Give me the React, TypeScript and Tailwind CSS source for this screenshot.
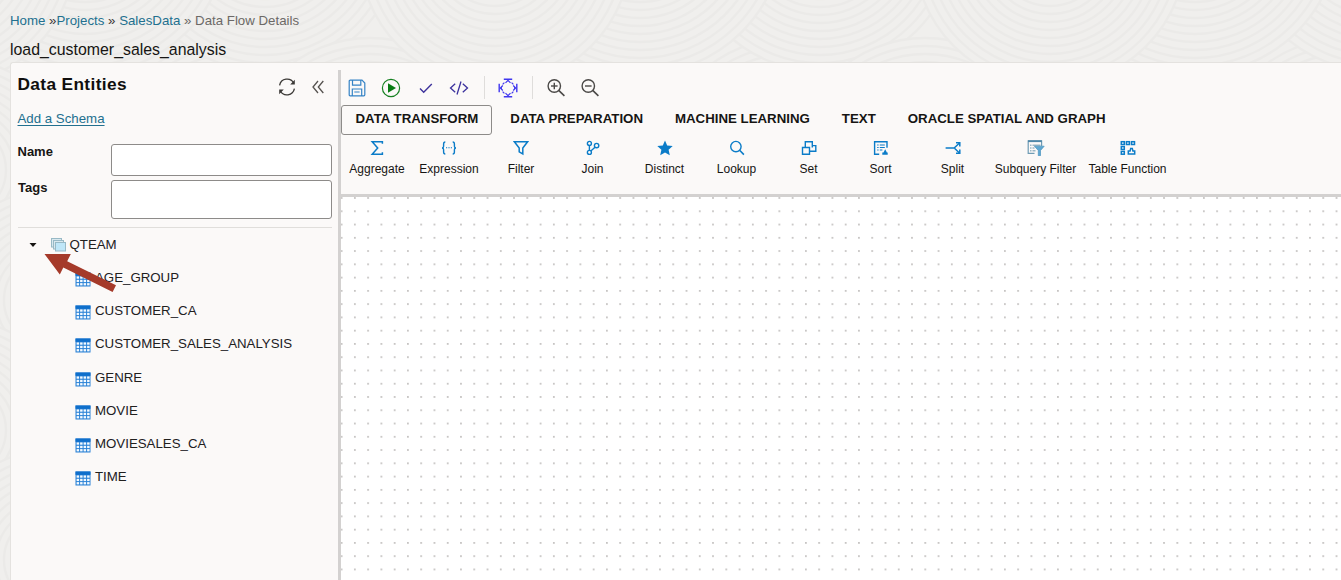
import type { ReactNode } from 'react';

const BLUE = '#0b7cc8';

const tables = ['AGE_GROUP', 'CUSTOMER_CA', 'CUSTOMER_SALES_ANALYSIS', 'GENRE', 'MOVIE', 'MOVIESALES_CA', 'TIME'];

function Rings({ cx, cy, max }: { cx: number; cy: number; max: number }) {
  const radii: number[] = [];
  for (let r = max; r > 8; r -= 8) radii.push(r);
  return (
    <g>
      {radii.map((r) => (
        <circle key={r} cx={cx} cy={cy} r={r} fill="#f0efed" stroke="#ebeae8" strokeWidth="2.4" />
      ))}
    </g>
  );
}

function Backdrop() {
  return (
    <svg className="absolute inset-0 h-full w-full" viewBox="0 0 1341 580" preserveAspectRatio="none">
      <rect width="1341" height="580" fill="#f0efed" />
      {[-555, 0, 555].map((o) => (
        <g key={o}>
          <Rings cx={370 + o} cy={170} max={132} />
          <Rings cx={790 + o} cy={170} max={132} />
          <Rings cx={820 + o} cy={-65} max={136} />
          <Rings cx={640 + o} cy={-70} max={144} />
          <Rings cx={495 + o} cy={-50} max={136} />
        </g>
      ))}
      {[0, 1, 2, 3].map((i) => (
        <Rings key={i} cx={i % 2 ? 50 : -40} cy={170 + i * 130} max={110} />
      ))}
    </svg>
  );
}

function TableIcon() {
  return (
    <svg className="mt-[3px] h-[15px] w-4 shrink-0" viewBox="0 0 16 15">
      <rect x="0.5" y="0.5" width="15" height="14" fill="#2a82d6" />
      <rect x="0.5" y="0.5" width="15" height="3.3" fill="#0f6fcb" />
      {[4.4, 7.8, 11.1].map((y) =>
        [1.6, 5.1, 8.6, 12.1].map((x) => (
          <rect key={`${x}-${y}`} x={x} y={y} width="2.5" height="2.3" fill="#f4faff" />
        )),
      )}
    </svg>
  );
}

function StackIcon() {
  return (
    <svg className="h-[14px] w-[15px]" viewBox="0 0 15 14" stroke="#98b9c6" strokeWidth="1">
      <rect x="0.5" y="0.5" width="10" height="8.5" fill="#d9e8ee" />
      <rect x="2.5" y="2.5" width="10" height="8.5" fill="#d9e8ee" />
      <rect x="4.5" y="4.5" width="10" height="8.5" fill="#bfe6f8" />
    </svg>
  );
}

function Glyph({ children, w = 16 }: { children: ReactNode; w?: number }) {
  return (
    <svg width={w} height="16" viewBox={`0 0 ${w} 16`} fill="none" stroke={BLUE} strokeWidth="1.4">
      {children}
    </svg>
  );
}

const operators: { label: string; box: string; icon: ReactNode }[] = [
  { label: 'Aggregate', box: 'w-[72px]', icon: <Glyph><path d="M13.4 3.7V1.8H3.2L8.7 8l-5.5 6.2h10.2v-1.9" strokeWidth="1.5" /></Glyph> },
  {
    label: 'Expression', box: 'w-[72px]',
    icon: (
      <Glyph>
        <path d="M4.3 2C2.6 2 2.6 2.8 2.6 4v2.3C2.6 7.3 2 8 1 8c1 0 1.6.7 1.6 1.7V12c0 1.2 0 2 1.7 2M11.7 2c1.7 0 1.7.8 1.7 2v2.3c0 1 .6 1.7 1.6 1.7-1 0-1.6.7-1.6 1.7V12c0 1.2 0 2-1.7 2" />
        <path d="M5 7.8h1.2M7.4 7.8h1.2M9.8 7.8H11" strokeWidth="1.1" />
      </Glyph>
    ),
  },
  { label: 'Filter', box: 'w-[72px]', icon: <Glyph><path d="M1.4 1.8h13.2L9.8 8v6l-3.6-2.2V8z" strokeWidth="1.5" /></Glyph> },
  {
    label: 'Join', box: 'w-[71px]',
    icon: (
      <Glyph>
        <circle cx="4.4" cy="3.4" r="2" /><circle cx="4.4" cy="12.4" r="2" /><circle cx="11.6" cy="5.6" r="2.2" />
        <path d="M4.4 5.4v5M5.8 11l4.2-3.8" />
      </Glyph>
    ),
  },
  { label: 'Distinct', box: 'w-[73px]', icon: <Glyph><path d="M8 .5l2.2 5 5.5.5-4.1 3.8 1.2 5.4L8 12.4l-4.8 2.8 1.2-5.4L.3 6l5.5-.5z" fill={BLUE} stroke="none" /></Glyph> },
  { label: 'Lookup', box: 'w-[71px]', icon: <Glyph><circle cx="6.9" cy="6.6" r="5.2" /><path d="M10.6 10.3l4.3 4.3" strokeWidth="1.6" /></Glyph> },
  {
    label: 'Set', box: 'w-[73px]',
    icon: <Glyph><path d="M4.3 7.5V1.7h7v5.8M1.5 7.5h7v6.7h-7zM11.3 5.6h3.5v5.6H8.5" /></Glyph>,
  },
  {
    label: 'Sort', box: 'w-[71px]',
    icon: (
      <Glyph>
        <path d="M6.2 14.2H1.6V1.7h12.4v6" />
        <path d="M4.2 5h1.4M6.8 5h5M4.2 7.5h1.4M6.8 7.5h5M4.2 10h1.4M6.8 10h2.6" strokeWidth="1.1" />
        <path d="M12.2 9.2l1.7 3.3h.8v2.2H9.3v-2.2h1.2z" fill={BLUE} stroke="none" />
      </Glyph>
    ),
  },
  {
    label: 'Split', box: 'w-[73px]',
    icon: <Glyph><path d="M.6 8H9M9.2 8l5-4.7M9.2 8l5 4.7" strokeWidth="1.5" /><path d="M11 2.8h3.8v3.6M11 13.2h3.8V9.6" strokeWidth="1.5" /></Glyph>,
  },
  {
    label: 'Subquery Filter', box: 'w-[93px]',
    icon: (
      <Glyph w={18}>
        <path d="M7.5 13.4H1.2V.9h13.4v5" stroke="#6f9cb4" strokeWidth="1.2" />
        <path d="M1 1.2h13.8" stroke="#4f87a8" strokeWidth="1.8" />
        <path d="M3 5.3h1.5M5.5 5.3h8M3 8h1.5M5.5 8h2M3 10.7h1.5M5.5 10.7h3" stroke="#9bb6c4" />
        <path d="M7.4 6.2h9.8l-3.7 4.3v5.2h-2.2v-5.2z" fill="#5ea7d2" stroke="#4b93bf" strokeWidth=".7" />
      </Glyph>
    ),
  },
  {
    label: 'Table Function', box: 'w-[91px]',
    icon: (
      <Glyph>
        {[[1.3, 1.7], [6.4, 1.7], [11.5, 1.7], [1.3, 6.6], [1.3, 11.4]].map(([x, y]) => (
          <rect key={`${x}-${y}`} x={x} y={y} width="3" height="2.8" strokeWidth="1.5" />
        ))}
        <path d="M8.3 14.1v-3.2h1.8l.6-2.5h1.6l.6 2.5h1.8v3.2z" strokeWidth="1.5" />
      </Glyph>
    ),
  },
];

function Toolbar() {
  return (
    <div className="flex h-9 items-center pb-px pl-[7px]">
      <svg className="size-[18px]" viewBox="0 0 18 18" fill="none" stroke="#3583c5" strokeWidth="1.2">
        <path d="M1.2 2.2q0-1 1-1H14l2.8 2.8v11.8q0 1-1 1H2.2q-1 0-1-1zM4.5 1.5v4.7h8.3V1.5M4.3 16.5V10h9.4v6.5M6.3 13h5.3" />
      </svg>
      <svg className="ml-[15px] size-5" viewBox="0 0 20 20">
        <circle cx="10" cy="10" r="8.6" fill="none" stroke="#168021" strokeWidth="1.2" />
        <path d="M7 5.3l8 4.7-8 4.7z" fill="#087c13" />
      </svg>
      <svg className="ml-[18px] h-4 w-[14px]" viewBox="0 0 14 16" fill="none" stroke="#3d329b" strokeWidth="1.4">
        <path d="M1 8.5l3.7 3.7L12.8 4" />
      </svg>
      <svg className="ml-[16px] h-4 w-5" viewBox="0 0 20 16" fill="none" stroke="#3b319d" strokeWidth="1.3">
        <path d="M6.2 3.7L1.5 8l4.7 4.3M13.8 3.7L18.5 8l-4.7 4.3M12 1.5L8 14.5" />
      </svg>
      <div className="ml-[15px] h-[23px] w-px bg-[#dfdddb]" />
      <svg className="ml-[13px] size-5" viewBox="0 0 20 20" fill="none" stroke="#4037ef" strokeWidth="1.4">
        <path d="M5.8 1.2h8.4M5.8 18.8h8.4M1.2 5.8v8.4M18.8 5.8v8.4" />
        <path d="M7.5 4.8L10 2.3l2.5 2.5M7.5 15.2l2.5 2.5 2.5-2.5M4.8 7.5L2.3 10l2.5 2.5M15.2 7.5l2.5 2.5-2.5 2.5M2 10h2M16 10h2" strokeWidth="1.2" />
        <path d="M4.6 6.4l1.8-1.8M13.6 4.6l1.8 1.8M15.4 13.6l-1.8 1.8M6.4 15.4l-1.8-1.8" strokeWidth="1.2" />
      </svg>
      <div className="ml-[14px] h-[23px] w-px bg-[#dfdddb]" />
      {[true, false].map((plus) => (
        <svg key={String(plus)} className={plus ? 'ml-[14px] size-[18px]' : 'ml-4 size-[18px]'} viewBox="0 0 18 18" fill="none" stroke="#4b4947" strokeWidth="1.4">
          <circle cx="7.3" cy="7" r="6.2" />
          <path d="M11.7 11.4l5.7 5.4" strokeWidth="1.6" />
          <path d="M4 7h6.6" />
          {plus && <path d="M7.3 3.7v6.6" />}
        </svg>
      ))}
    </div>
  );
}

function Sidebar() {
  return (
    <aside className="relative w-[327px] shrink-0 pl-[6.5px] pr-[6px]">
      <div className="flex h-[38px] items-start justify-between pt-[11px]">
        <h2 className="text-[17.3px] font-bold leading-5 tracking-[0.36px] text-[#100f0e]">Data Entities</h2>
        <div className="flex items-center gap-4 pr-[8px] pt-[4px]">
          <svg className="size-[18px]" viewBox="0 0 18 18" fill="none" stroke="#3b3936" strokeWidth="1.3">
            <path d="M1.6 7.3A7.6 7.6 0 0 1 15.8 5.2M16.4 10.7A7.6 7.6 0 0 1 2.2 12.8" />
            <path d="M16.8 1.8v4.6h-4.6zM1.2 16.2v-4.6h4.6z" fill="#3b3936" stroke="none" />
          </svg>
          <svg className="h-[14px] w-3" viewBox="0 0 12 14" fill="none" stroke="#55524f" strokeWidth="1.3">
            <path d="M6 1L1 7l5 6M11.3 1l-5 6 5 6" />
          </svg>
        </div>
      </div>
      <a className="mt-[10px] block w-fit text-[13.27px] leading-4 text-[#22708f] underline underline-offset-2">Add a Schema</a>
      <div className="mt-[17px] flex h-8 justify-between text-[13px] font-bold leading-4 text-[#161513]">
        <label>Name</label>
        <div className="h-8 w-[221px] rounded-[3px] border border-[#8d8b89] bg-white" />
      </div>
      <div className="mt-[4px] flex h-[39px] justify-between text-[13px] font-bold leading-4 text-[#161513]">
        <label className="pl-[0.5px]">Tags</label>
        <div className="h-[39px] w-[221px] rounded-[3px] border border-[#8d8b89] bg-white" />
      </div>
      <div className="mt-2 h-px bg-[#e0dedb]" />
      <div className="flex h-[33px] items-center pl-[11px] pt-px text-[13.27px] text-[#21201e]">
        <svg className="h-1 w-2" viewBox="0 0 8 4"><path d="M.5 0h7L4 4z" fill="#161513" /></svg>
        <span className="ml-[14px] flex items-center gap-1"><StackIcon />QTEAM</span>
      </div>
      <ul className="text-[13.27px] text-[#21201e]">
        {tables.map((t) => (
          <li key={t} className="flex h-[33.3px] items-center gap-1 pl-[57.5px]"><TableIcon /><span className="whitespace-nowrap">{t}</span></li>
        ))}
      </ul>
      <svg className="absolute left-[33px] top-[190px] h-[40px] w-[74px]" viewBox="0 0 74 40">
        <path d="M.5 1l26.3 0-3.6 7.2 48.8 24-3.4 6.8L19.3 14.5 15.8 21.5z" fill="#a53a2a" />
      </svg>
    </aside>
  );
}

export default function App() {
  return (
    <div className="relative h-[580px] w-[1341px] overflow-hidden font-['Liberation_Sans',Arial,sans-serif]">
      <Backdrop />
      <div className="relative flex h-full flex-col">
        <header className="h-[62px] shrink-0 pl-[10px] pt-3 text-[#161513]">
          <nav className="flex h-4 whitespace-pre text-[13.27px] leading-[17px] text-[#22708f]">
            <a>Home</a><span className="text-[#3a3836]"> »</span><a>Projects</a><span className="text-[#3a3836]"> » </span>
            <a>SalesData</a><span className="text-[#6c6966]"> » Data Flow Details</span>
          </nav>
          <h1 className="mt-3 text-[15.88px] leading-5">load_customer_sales_analysis</h1>
        </header>
        <main className="ml-[10px] flex min-h-0 flex-1 rounded-tl-[3px] border-l border-t border-[#e4e2df] bg-[#fbf9f8]">
          <Sidebar />
          <section className="mt-[7px] flex min-w-0 flex-1 flex-col border-l-[3px] border-[#d3d1d0]">
            <div className="h-[127px] shrink-0 border-b-[3px] border-[#d3d1d0]">
              <Toolbar />
              <div className="-mt-px flex h-[30px] text-[13.27px] font-bold text-[#161513]">
                {['DATA TRANSFORM', 'DATA PREPARATION', 'MACHINE LEARNING', 'TEXT', 'ORACLE SPATIAL AND GRAPH'].map((t, i) => (
                  <div key={t} className={i === 0 ? 'mr-[2px] flex items-center whitespace-nowrap rounded-[3px] border border-[#8d8b89] pl-[13.5px] pr-[13px] pb-[3px]' : 'flex items-center whitespace-nowrap px-4 pb-[3px]'}>{t}</div>
                ))}
              </div>
              <div className="flex pt-[5px] text-xs leading-4 text-[#161513]">
                {operators.map((o) => (
                  <div key={o.label} className={`${o.box} flex shrink-0 flex-col items-center gap-[5px] whitespace-nowrap`}>
                    {o.icon}<span>{o.label}</span>
                  </div>
                ))}
              </div>
            </div>
            <div className="flex-1 bg-white bg-[radial-gradient(circle_at_6.6px_6.6px,#b5b3b1_0.5px,transparent_1.05px)] bg-[length:13.275px_13.275px] bg-[position:-6px_-5.6px]" />
          </section>
        </main>
      </div>
    </div>
  );
}
